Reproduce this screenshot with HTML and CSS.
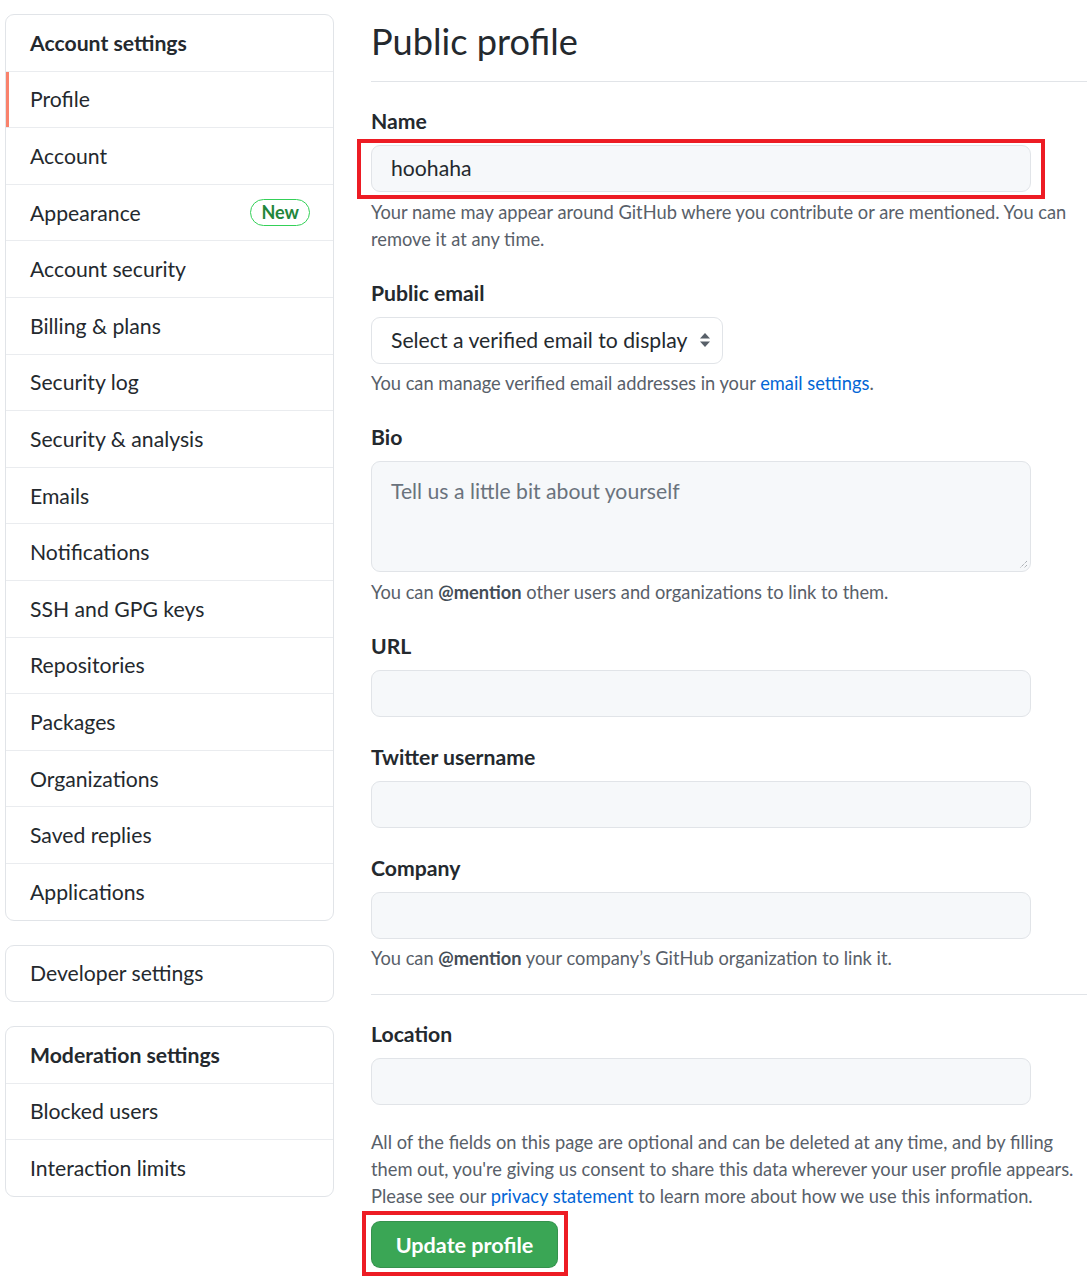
FILE: index.html
```html
<!DOCTYPE html>
<html lang="en">
<head>
<meta charset="utf-8">
<title>Public profile</title>
<link rel="stylesheet" href="styles.css">
</head>
<body>
<div class="page">
  <aside class="sidebar">
    <nav class="menu">
      <div class="menu-heading">Account settings</div>
      <a class="menu-item selected">Profile</a>
      <a class="menu-item">Account</a>
      <a class="menu-item">Appearance <span class="badge">New</span></a>
      <a class="menu-item">Account security</a>
      <a class="menu-item">Billing &amp; plans</a>
      <a class="menu-item">Security log</a>
      <a class="menu-item">Security &amp; analysis</a>
      <a class="menu-item">Emails</a>
      <a class="menu-item">Notifications</a>
      <a class="menu-item">SSH and GPG keys</a>
      <a class="menu-item">Repositories</a>
      <a class="menu-item">Packages</a>
      <a class="menu-item">Organizations</a>
      <a class="menu-item">Saved replies</a>
      <a class="menu-item">Applications</a>
    </nav>
    <nav class="menu">
      <a class="menu-item">Developer settings</a>
    </nav>
    <nav class="menu">
      <div class="menu-heading">Moderation settings</div>
      <a class="menu-item">Blocked users</a>
      <a class="menu-item">Interaction limits</a>
    </nav>
  </aside>
  <main class="main">
    <h1 class="title">Public profile</h1>
    <div class="form-group">
      <label class="label">Name</label>
      <div class="annot-wrap">
        <div class="input">hoohaha</div>
        <span class="annot annot-name"></span>
      </div>
      <p class="note">Your name may appear around GitHub where you contribute or are mentioned. You can remove it at any time.</p>
    </div>
    <div class="form-group">
      <label class="label">Public email</label>
      <div class="select">Select a verified email to display
        <svg class="caret" width="12" height="18" viewBox="0 0 12 18"><path d="M6 2 L11 7.5 H1 Z" fill="#586069"/><path d="M6 16 L11 10.5 H1 Z" fill="#586069"/></svg>
      </div>
      <p class="note">You can manage verified email addresses in your <a class="link">email settings</a>.</p>
    </div>
    <div class="form-group">
      <label class="label">Bio</label>
      <div class="textarea"><span class="placeholder">Tell us a little bit about yourself</span>
        <svg class="grip" width="10" height="10" viewBox="0 0 10 10"><path d="M9 2 L2 9 M9 6 L6 9" stroke="#8a8f95" stroke-width="1" stroke-dasharray="1 1"/></svg>
      </div>
      <p class="note">You can <b>@mention</b> other users and organizations to link to them.</p>
    </div>
    <div class="form-group">
      <label class="label">URL</label>
      <div class="input"></div>
    </div>
    <div class="form-group">
      <label class="label">Twitter username</label>
      <div class="input"></div>
    </div>
    <div class="form-group last">
      <label class="label">Company</label>
      <div class="input"></div>
      <p class="note">You can <b>@mention</b> your company’s GitHub organization to link it.</p>
    </div>
    <hr class="divider">
    <div class="form-group location">
      <label class="label">Location</label>
      <div class="input"></div>
    </div>
    <p class="note info">All of the fields on this page are optional and can be deleted at any time, and by filling them out, you're giving us consent to share this data wherever your user profile appears. Please see our <a class="link">privacy statement</a> to learn more about how we use this information.</p>
    <div class="annot-wrap btn-wrap">
      <button class="btn">Update profile</button>
      <span class="annot annot-btn"></span>
    </div>
  </main>
</div>
</body>
</html>
```

FILE: styles.css
```css
* { box-sizing: border-box; }
html, body { margin: 0; padding: 0; background: #fff; }
body {
  font-family: Lato, "Liberation Sans", sans-serif;
  color: #24292e;
  overflow-x: hidden;
}
.page {
  display: flex;
  align-items: flex-start;
  padding: 14px 0 0 5px;
  gap: 37px;
  min-height: 1277px;
}
.sidebar {
  width: 329px;
  flex: none;
  display: flex;
  flex-direction: column;
  gap: 24px;
}
.menu {
  border: 1px solid #e1e4e8;
  border-radius: 9px;
  display: flex;
  flex-direction: column;
  overflow: hidden;
}
.menu-heading, .menu-item {
  display: flex;
  align-items: center;
  justify-content: space-between;
  height: 56.6px;
  padding: 0 23px 0 24px;
  font-size: 21.2px;
  border-top: 1px solid #eaecef;
  color: #24292e;
}
.menu > :first-child { border-top: 0; height: 55.6px; }
.menu-heading { font-weight: 700; }
.menu-item.selected { box-shadow: inset 3px 0 0 #f9826c; }
.badge {
  font-size: 18px;
  font-weight: 700;
  color: #22863a;
  border: 1.5px solid #34d058;
  border-radius: 20px;
  padding: 1px 10px 2px;
  line-height: 22px;
}
.main {
  flex: 1;
  min-width: 0;
  padding-bottom: 9px;
}
.title {
  margin: 0;
  font-size: 36.2px;
  font-weight: 400;
  line-height: 54px;
  padding-bottom: 13px;
  border-bottom: 1px solid #e1e4e8;
}
.form-group { margin-bottom: 26px; }
.title + .form-group { margin-top: 25px; }
.form-group.last { margin-bottom: 22px; }
.form-group.location { margin-top: 25px; margin-bottom: 23.5px; }
.label {
  display: block;
  font-size: 21.2px;
  font-weight: 700;
  line-height: 28px;
  margin-bottom: 10px;
}
.annot-wrap { position: relative; width: 660px; }
.input {
  width: 660px;
  height: 47px;
  background: #f6f8fa;
  border: 1px solid #e1e4e8;
  border-radius: 9px;
  font-size: 21.2px;
  line-height: 45px;
  padding: 0 19px;
}
.select {
  display: inline-flex;
  align-items: center;
  gap: 12px;
  height: 47px;
  padding: 0 11px 0 19px;
  border: 1px solid #e1e4e8;
  border-radius: 9px;
  font-size: 21.2px;
  background: #fff;
}
.textarea {
  position: relative;
  width: 660px;
  height: 111px;
  background: #f6f8fa;
  border: 1px solid #e1e4e8;
  border-radius: 9px;
  padding: 15px 19px 14px;
  font-size: 21.2px;
  line-height: 28px;
}
.placeholder { color: #6a737d; }
.grip { position: absolute; right: 2px; bottom: 2px; }
.note {
  margin: 6.5px 0 0;
  font-size: 18.3px;
  line-height: 27px;
  color: #586069;
}
.note b { color: #444d56; font-weight: 700; }
.link { color: #0366d6; }
.divider {
  border: 0;
  border-top: 1px solid #e1e4e8;
  margin: 0;
  width: 100%;
}
.note.info { margin: 0; }
.btn-wrap { width: 187px; margin-top: 11.5px; }
.btn {
  display: block;
  width: 187px;
  height: 47px;
  background: #3aa655;
  color: #fff;
  border: 1px solid rgba(27,31,35,0.15);
  border-radius: 9px;
  font-family: Lato, "Liberation Sans", sans-serif;
  font-size: 21.6px;
  font-weight: 700;
  padding: 0;
}
.annot {
  position: absolute;
  border: 4px solid #ed1c24;
  pointer-events: none;
}
.annot-name { left: -14px; top: -6px; width: 688px; height: 60px; }
.annot-btn { left: -9px; top: -10px; width: 206px; height: 65px; }
```
